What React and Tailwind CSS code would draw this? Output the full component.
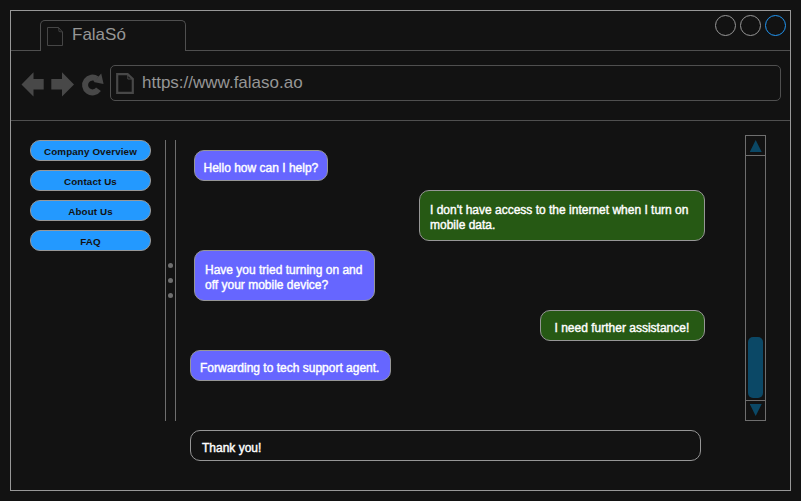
const PageIcon = ({ className }) => (
  <svg className={className} viewBox="0 0 18 21" fill="none" stroke="#484848" strokeWidth="2.2">
    <path d="M1.2 1.2H11.6L16.8 6V19.8H1.2Z" />
    <path d="M11.8 1.5V6H16.5" strokeWidth="1" />
  </svg>
);

const TabIcon = () => (
  <svg className="h-[20px] w-[17px]" viewBox="0 0 17 20" fill="none" stroke="#464646">
    <path d="M0.5 0.5H11.5L15.5 5V18.5H0.5Z" />
    <path d="M11.5 0.5L12 4.5L15.5 5" strokeWidth="0.8" />
  </svg>
);

const NavIcons = () => (
  <svg className="h-[30px] w-[84px]" viewBox="0 0 84 30" fill="#484848">
    <path d="M0.5 15.5L12.5 3.3V10H22.7V20.5H12.5V27.5Z" />
    <path d="M53 15.5L41 3.3V10H30.3V20.5H41V27.5Z" />
    <path d="M77.5 20.3A7.4 7.4 0 1 1 75.8 10" fill="none" stroke="#484848" strokeWidth="6" />
    <path d="M80.2 4.4L82.6 15L72.6 12.9Z" />
  </svg>
);

const links = ["Company Overview", "Contact Us", "About Us", "FAQ"];

const Bubble = ({ className, children }) => (
  <div
    className={
      "rounded-[10px] border border-[#969696] text-[12px] leading-[15px] text-white [-webkit-text-stroke:0.4px_white] whitespace-nowrap " +
      className
    }
  >
    {children}
  </div>
);

export default function App() {
  return (
    <div className="h-[501px] w-[801px] overflow-hidden bg-[#121212] p-[10px] font-['Liberation_Sans',Arial,sans-serif]">
      <div className="flex h-[481px] w-[781px] flex-col border border-[#979797]">
        <header className="flex h-[40px] shrink-0">
          <div className="w-[29px] border-b border-[#4f4f4f]" />
          <div className="mt-[9px] flex w-[146px] rounded-t-[5px] border border-b-0 border-[#4f4f4f] pt-[6px] pl-[6px]">
            <TabIcon />
            <span className="-mt-[2px] ml-[8px] text-[17px] leading-[20px] text-[#969696]">FalaSó</span>
          </div>
          <div className="flex flex-1 justify-end gap-[4px] border-b border-[#4f4f4f] pt-[4px] pr-[4px]">
            <span className="size-[21px] rounded-full border border-[#979797]" />
            <span className="size-[21px] rounded-full border border-[#979797]" />
            <span className="size-[21px] rounded-full border border-[#2196f3]" />
          </div>
        </header>

        <div className="flex h-[70px] shrink-0 border-b border-[#4f4f4f] pt-[14px] pl-[10px]">
          <div className="mt-[4px] w-[89px]">
            <NavIcons />
          </div>
          <div className="flex h-[36px] w-[671px] rounded-[5px] border border-[#4f4f4f] pt-[7px] pl-[5px]">
            <PageIcon className="h-[21px] w-[18px]" />
            <span className="ml-[8px] text-[17px] leading-[20px] text-[#969696]">https://www.falaso.ao</span>
          </div>
        </div>

        <main className="flex flex-1">
          <nav className="ml-[19px] flex w-[121px] flex-col gap-[9px] pt-[19px]">
            {links.map((label) => (
              <button
                key={label}
                className="flex h-[21px] w-[121px] justify-center rounded-[10px] border border-[#979797] bg-[#2399ff] pt-[3px] text-[9.8px] leading-[15px] font-bold tracking-[0.12px] text-[#121212]"
              >
                {label}
              </button>
            ))}
          </nav>

          <div className="mt-[19px] ml-[14px] flex h-[281px] w-[11px] flex-col items-center gap-[10px] border-x border-[#6e6e6e] pt-[123px]">
            <span className="size-[5px] shrink-0 rounded-full bg-[#6e6e6e]" />
            <span className="size-[5px] shrink-0 rounded-full bg-[#6e6e6e]" />
            <span className="size-[5px] shrink-0 rounded-full bg-[#6e6e6e]" />
          </div>

          <section className="ml-[14px] flex w-[515px] flex-col items-start gap-[9px] pt-[29px]">
            <Bubble className="ml-[4px] h-[31px] w-[134px] bg-[#6666ff] pt-[10px] pl-[8.5px]">Hello how can I help?</Bubble>
            <Bubble className="ml-[229px] h-[51px] w-[286px] bg-[#265914] pt-[12px] pl-[10px]">
              I don't have access to the internet when I turn on
              <br />
              mobile data.
            </Bubble>
            <Bubble className="ml-[4px] h-[51px] w-[181px] bg-[#6666ff] pt-[12px] pl-[10px]">
              Have you tried turning on and
              <br />
              off your mobile device?
            </Bubble>
            <Bubble className="ml-[350px] h-[31px] w-[165px] bg-[#265914] pt-[10px] pl-[13.5px]">I need further assistance!</Bubble>
            <Bubble className="h-[31px] w-[201px] bg-[#6666ff] pt-[10px] pl-[9px]">Forwarding to tech support agent.</Bubble>
            <Bubble className="mt-[40px] h-[31px] w-[511px] pt-[10px] pl-[11px]">Thank you!</Bubble>
          </section>

          <aside className="mt-[14px] ml-[40px] flex h-[286px] w-[21px] flex-col items-center border border-[#6e6e6e]">
            <div className="flex h-[20px] w-full shrink-0 justify-center border-b border-[#6e6e6e] pt-[4px]">
              <svg className="h-[12px] w-[12px]" viewBox="0 0 12 12" fill="#0b4866">
                <path d="M5.7 0L11.7 12H-0.3Z" />
              </svg>
            </div>
            <div className="mt-[181px] h-[61px] w-[15px] shrink-0 rounded-[5px] bg-[#0b4866]" />
            <div className="mt-[2px] flex h-[20px] w-full shrink-0 justify-center border-t border-[#6e6e6e] pt-[3px]">
              <svg className="h-[12px] w-[12px]" viewBox="0 0 12 12" fill="#0b4866">
                <path d="M-0.3 0H11.7L5.7 12Z" />
              </svg>
            </div>
          </aside>
        </main>
      </div>
    </div>
  );
}
